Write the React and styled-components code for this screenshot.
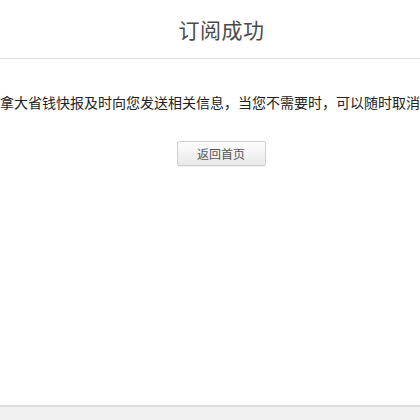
import React from "react";
import styled, { createGlobalStyle } from "styled-components";

const GlobalStyle = createGlobalStyle`
  html, body {
    margin: 0;
    padding: 0;
    background: #fff;
    overflow: hidden;
  }
  body {
    font-family: "Noto Sans CJK SC", "Liberation Sans", sans-serif;
  }
`;

const Page = styled.div`
  width: 420px;
  height: 420px;
  display: flex;
  flex-direction: column;
  overflow: hidden;
`;

const Header = styled.div`
  height: 58px;
  padding-left: 23px;
  border-bottom: 1px solid #dcdcdc;
  display: flex;
  align-items: center;
  justify-content: center;
  h1 {
    margin: 0;
    font-size: 21px;
    font-weight: normal;
    color: #4a4a4a;
    letter-spacing: 0.5px;
  }
`;

const Main = styled.div`
  flex: 1;
  display: flex;
  flex-direction: column;
  align-items: center;
  padding-top: 33px;
`;

const Message = styled.div`
  width: 100%;
  display: flex;
  justify-content: center;
  white-space: nowrap;
  font-size: 14px;
  line-height: 20px;
  color: #222;
`;

const HomeButton = styled.button`
  margin-top: 29px;
  margin-left: 22px;
  width: 89px;
  height: 25px;
  padding: 0;
  border: 1px solid #d0d0d0;
  border-radius: 2px;
  background: linear-gradient(#fdfdfd, #e9e9e9);
  box-shadow: 0 1px 1px rgba(0, 0, 0, 0.06);
  font-family: inherit;
  font-size: 12px;
  color: #555;
  cursor: pointer;
`;

const Footer = styled.div`
  height: 13px;
  border-top: 2px solid #dcdcdc;
  background: #f0f0f0;
`;

export default function App() {
  return (
    <>
      <GlobalStyle />
      <Page>
        <Header>
          <h1>订阅成功</h1>
        </Header>
        <Main>
          <Message>
            <span>通过加拿大省钱快报及时向您发送相关信息，当您不需要时，可以随时取消订阅。</span>
          </Message>
          <HomeButton>返回首页</HomeButton>
        </Main>
        <Footer />
      </Page>
    </>
  );
}
